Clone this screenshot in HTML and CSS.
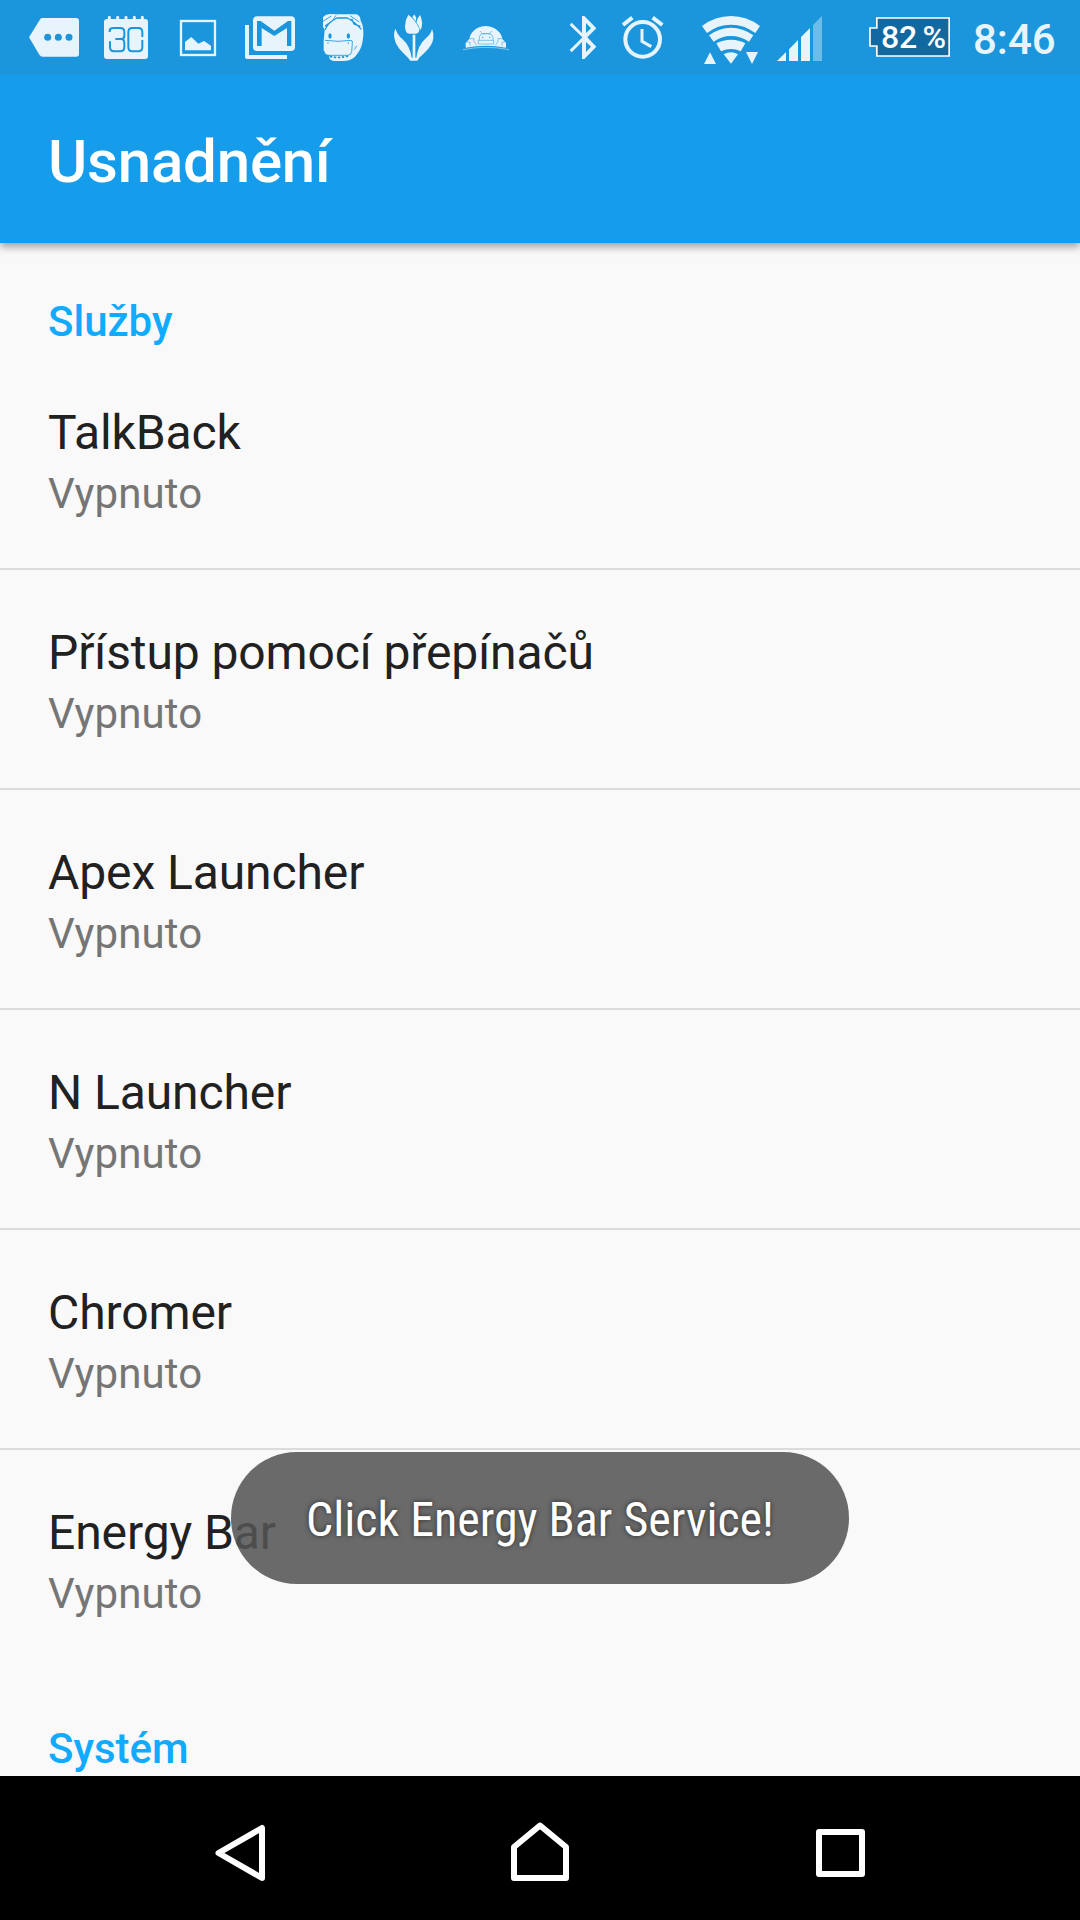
FILE: index.html
```html
<!DOCTYPE html>
<html lang="cs">
<head>
<meta charset="utf-8">
<title>Usnadnění</title>
<link rel="stylesheet" href="styles.css">
</head>
<body>
<div class="screen">
  <header class="status">
    <div class="notifications">
      <svg class="slot" viewBox="54 0 216 225"><path fill="currentColor" d="M126 54H229Q237 54 237 62V162Q237 170 229 170H128Q122 170 118 164L87 112L119 60Q122 54 126 54Z"/><g class="cut"><circle cx="143" cy="112" r="10.500"/><circle cx="175" cy="112" r="10.500"/><circle cx="207" cy="112" r="10.500"/></g></svg>
      <svg class="slot" viewBox="270 0 216 225"><rect x="312" y="57" width="132" height="120" rx="9" fill="currentColor"/><path class="line" stroke-width="9" stroke-linecap="round" d="M328 60V52M353 60V52M378 60V52M403 60V52M427 60V52"/><path class="cutline" stroke-width="6" d="M329 96V92Q329 84 340 84H361Q373 84 373 96V107Q373 117 363 117H346M363 117Q373 117 373 129V141Q373 154 361 154H342Q330 154 330 142V124M427 111V97Q427 84 415 84H397Q385 84 385 97V141Q385 154 397 154H415Q427 154 427 141V120"/></svg>
      <svg class="slot" viewBox="486 0 216 225"><rect class="line" x="543" y="63" width="102" height="102" stroke-width="7"/><path fill="currentColor" d="M555 151V126L574 111L595 131L612 123L633 137V151Z"/></svg>
      <svg class="slot" viewBox="702 0 216 225"><path class="line" stroke-width="12" stroke-linejoin="round" d="M741 75V171H861"/><rect x="759" y="49" width="126" height="104" rx="12" fill="currentColor"/><path class="cutfill" d="M771 138V63H782L823 92L864 63H874V138H861V84L823 108L785 84V138Z"/></svg>
      <svg class="slot" viewBox="18 0 216 225"><path fill="currentColor" d="M77 45Q90 40 107 43H145L170 43Q181 47 182 62Q191 77 190 105Q188 143 172 161Q160 181 132 183H103Q91 182 88 174V165H79Q71 160 71 151V123L74 89L69 80V52Z"/><path class="cutline" stroke-width="4" d="M75 90Q84 67 111 54H142Q165 66 184 88M155 56L162 72L181 79M96 63L75 79"/><path class="cutline" stroke-width="2.500" d="M69 64L94 48M108 46L99 60M150 47L178 66M75 121Q115 127 153 121Q158 120 157 130L155 155Q154 166 142 166H84Q73 165 72 153M170 137Q166 147 162 149"/><path class="cutline" stroke-width="5" stroke-dasharray="7 5" d="M90 169Q118 176 148 167"/><ellipse class="cutfill" cx="90" cy="108" rx="5" ry="8"/><ellipse class="cutfill" cx="145" cy="108" rx="5" ry="8"/><circle class="cutfill" cx="84" cy="129" r="2"/><circle class="cutfill" cx="145" cy="129" r="2"/></svg>
      <svg class="slot" viewBox="234 0 216 225"><g fill="currentColor"><path d="M325 44Q316 58 315 78Q315 102 330 101H347Q359 99 358 86Q345 58 325 44Z"/><path d="M343 43L337 52Q344 60 347 64L349 54ZM360 45Q351 55 349 67Q357 78 361 91Q369 76 365 60Q364 52 360 45Z"/><path d="M338 104H346V173H338ZM287 86Q280 98 283 113Q286 136 309 158Q322 170 331 182H352Q359 170 373 159Q398 136 400 115Q402 98 396 87Q394 102 376 116Q354 135 349 173H335Q330 137 307 117Q290 102 287 86Z"/></g></svg>
      <svg class="slot" viewBox="450 0 216 225"><path fill="currentColor" d="M508 117Q511 96 532 84Q557 72 582 84Q604 96 607 117L618 128V143Q558 132 497 143V128Z"/><path class="line faint" stroke-width="3" d="M489 149Q558 135 627 149"/><path class="cutline dim" stroke-width="2.500" d="M541 93L546 101H570L575 93M538 121V111Q539 102 550 101H566Q577 102 579 111V121M535 121H581V132H535ZM508 116H522V124L530 136M608 116H594V124L587 136M498 126H510V138M618 126H606V138"/><circle class="cutfill" cx="548" cy="112" r="2"/><circle class="cutfill" cx="569" cy="112" r="2"/></svg>
    </div>
    <div class="system">
      <svg class="bluetooth" viewBox="42 0 174 225"><path fill="currentColor" fill-rule="evenodd" d="M126 48H133L169 85L142 112L169 140L133 177H126V126L95 157L89 150L126 113V111L89 75L95 68L126 99ZM138 69V99L153 85ZM138 126V156L153 140Z"/></svg>
      <svg class="alarm" viewBox="216 0 180 225"><circle class="line" cx="308" cy="118" r="52" stroke-width="12"/><path class="line" stroke-width="9" d="M306 87V124L334 140"/><path class="line" stroke-width="12" d="M249 75L277 53M338 53L367 75"/></svg>
      <svg class="wifi" viewBox="450 0 240 225"><g fill="currentColor"><path d="M486 78Q525 48 573 48T660 78L646 99Q613 74 573 74T501 99Z"/><path d="M507 106Q537 83 573 83T640 106L627 125Q602 108 573 108T521 125Z"/><path d="M529 130Q549 119 573 119T616 130L602 154Q588 147 573 147T543 154Z"/><path d="M551 163Q573 150 594 163L573 191ZM492 192L510 157L528 192ZM618 156H654L636 192Z"/></g></svg>
      <svg class="signal" viewBox="696 0 168 225"><path fill="currentColor" d="M711 183L738 156V183ZM747 148L774 120V183H747ZM783 111L810 84V183H783Z"/><path fill="currentColor" opacity=".4" d="M819 75L846 48V183H819Z"/></svg>
      <div class="battery">
        <svg viewBox="78 0 258 225"><path fill="#12699f" stroke="#fff" stroke-width="5" d="M110.500 54H327.500V168H110.500V138H90V84H110.500Z"/></svg>
        <span class="level">82 %</span>
      </div>
      <span class="clock">8:46</span>
    </div>
  </header>
  <div class="appbar"><h1>Usnadnění</h1></div>
  <main class="list">
    <h2>Služby</h2>
    <div class="item first"><div class="name">TalkBack</div><div class="state">Vypnuto</div></div>
    <div class="item"><div class="name">Přístup pomocí přepínačů</div><div class="state">Vypnuto</div></div>
    <div class="item"><div class="name">Apex Launcher</div><div class="state">Vypnuto</div></div>
    <div class="item"><div class="name">N Launcher</div><div class="state">Vypnuto</div></div>
    <div class="item"><div class="name">Chromer</div><div class="state">Vypnuto</div></div>
    <div class="item last"><div class="name">Energy Bar</div><div class="state">Vypnuto</div></div>
    <h2 class="second">Systém</h2>
  </main>
  <nav class="nav">
    <svg viewBox="200 1804 80 100"><path d="M262 1828V1878L218.500 1853Z"/></svg>
    <svg viewBox="500 1804 80 100"><path d="M514 1878V1847L540 1825.500L566 1847V1878Z"/></svg>
    <svg viewBox="800 1804 80 100"><rect x="819" y="1832" width="43" height="42"/></svg>
  </nav>
  <div class="toast"><span>Click Energy Bar Service!</span></div>
</div>
</body>
</html>
```
FILE: styles.css
```css
* { box-sizing: border-box; }
body { margin: 0; font-family: Roboto, sans-serif; }
.screen {
  position: relative;
  display: flex;
  flex-direction: column;
  width: 1080px;
  height: 1920px;
  overflow: hidden;
  background: #f9f9f9;
}
svg { display: block; flex: none; }

.status {
  position: relative;
  z-index: 1;
  display: flex;
  justify-content: space-between;
  height: 75px;
  padding: 0 26px 0 18px;
  background: #1b96dc;
  color: #e7f4fc;
}
.notifications, .system { display: flex; }
.slot { width: 72px; height: 75px; }
.line { fill: none; stroke: currentColor; }
.cut, .cutfill { fill: #1b96dc; }
.cutline { fill: none; stroke: #1b96dc; }
.faint { opacity: .5; }
.dim { opacity: .6; }
.bluetooth { width: 58px; height: 75px; }
.alarm { width: 60px; height: 75px; }
.wifi { width: 80px; height: 75px; margin-left: 18px; }
.signal { width: 56px; height: 75px; margin-left: 2px; }
.battery { position: relative; width: 86px; height: 75px; margin-left: 38px; }
.battery svg { width: 86px; height: 75px; }
.level {
  position: absolute;
  left: 15px;
  top: 18px;
  font-size: 32px;
  line-height: 38px;
  font-weight: 500;
  letter-spacing: -.3px;
  word-spacing: -2px;
  color: #fff;
  white-space: nowrap;
}
.clock {
  width: 81px;
  margin-left: 21px;
  padding-top: 15px;
  font-size: 42px;
  line-height: 50px;
  font-weight: 500;
  white-space: nowrap;
}

.appbar {
  position: relative;
  height: 168px;
  padding: 51px 48px 0;
  background: #159ceb;
  color: #fff;
  box-shadow: 0 4px 8px rgba(0, 0, 0, .36);
}
h1 { margin: 0; font-size: 60px; line-height: 72px; font-weight: 500; letter-spacing: -.2px; }

.list { flex: 1; overflow: hidden; }
h2 {
  height: 105px;
  margin: 0;
  padding: 54px 48px 0;
  font-size: 42px;
  line-height: 50px;
  font-weight: 500;
  color: #10aaff;
}
.second { padding-top: 49px; }
.item {
  height: 220px;
  padding: 54px 48px 0;
  border-bottom: 2px solid #dbdbdb;
}
.first { height: 222px; padding-top: 56px; }
.last { height: 225px; border-bottom: 0; }
.name { font-size: 48px; line-height: 58px; letter-spacing: -.1px; color: #212121; }
.state { padding-top: 7px; font-size: 42px; line-height: 50px; letter-spacing: .1px; color: #757575; }

.nav {
  display: flex;
  justify-content: space-between;
  align-items: center;
  height: 144px;
  padding: 12px 200px 0;
  background: #000;
}
.nav svg {
  width: 80px;
  height: 100px;
  fill: none;
  stroke: #fff;
  stroke-width: 6;
  stroke-linejoin: round;
}

.toast {
  position: absolute;
  left: 231px;
  top: 1452px;
  display: flex;
  justify-content: center;
  align-items: center;
  width: 618px;
  height: 132px;
  padding-top: 4px;
  border-radius: 66px;
  background: rgba(84, 84, 84, .87);
  color: #fff;
  font-family: "Roboto Condensed", Roboto, sans-serif;
  font-stretch: 75%;
  font-size: 48px;
  line-height: 58px;
  text-shadow: 0 0 5px rgba(0, 0, 0, .6);
  white-space: nowrap;
}
```
